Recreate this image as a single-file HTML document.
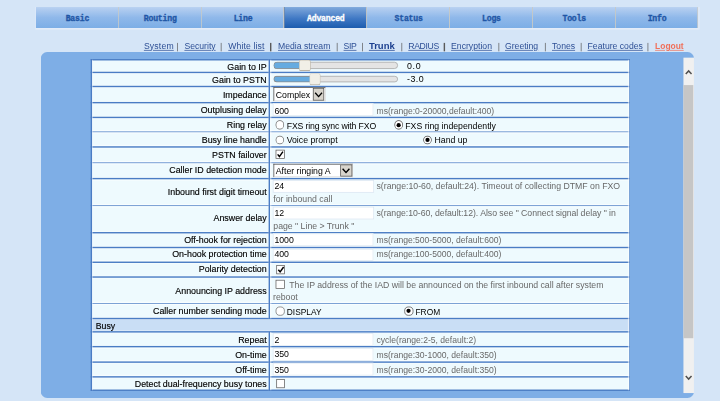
<!DOCTYPE html>
<html><head><meta charset="utf-8"><title>Trunk</title>
<style>
html,body{margin:0;padding:0;width:720px;height:401px;overflow:hidden;background:#d5e5f7;}
#r{position:absolute;left:0;top:0;width:1024px;height:570px;transform:scale(0.703125);transform-origin:0 0;font-family:"Liberation Sans",sans-serif;font-size:12px;color:#222;}
.a{position:absolute;}
</style></head><body><div id="r">
<div class="a" style="left:51.2px;top:9.96px;width:117.76px;height:30.15px;background:linear-gradient(#b9d1f1,#8fb8ea 50%,#7caee6);box-sizing:border-box;border-right:1.4px solid #c4c0b6;"></div>
<div class="a" style="left:110.08px;top:19.95px;font-size:11.6px;line-height:14.5px;font-weight:bold;color:#1f56a6;font-family:'Liberation Mono',monospace;white-space:nowrap;transform:translateX(-50%) scaleY(1.14);transform-origin:50% 72%;letter-spacing:-0.3px;-webkit-text-stroke:0.45px #1f56a6;">Basic</div>
<div class="a" style="left:168.96px;top:9.96px;width:117.76px;height:30.15px;background:linear-gradient(#b9d1f1,#8fb8ea 50%,#7caee6);box-sizing:border-box;border-right:1.4px solid #c4c0b6;"></div>
<div class="a" style="left:227.84px;top:19.95px;font-size:11.6px;line-height:14.5px;font-weight:bold;color:#1f56a6;font-family:'Liberation Mono',monospace;white-space:nowrap;transform:translateX(-50%) scaleY(1.14);transform-origin:50% 72%;letter-spacing:-0.3px;-webkit-text-stroke:0.45px #1f56a6;">Routing</div>
<div class="a" style="left:286.72px;top:9.96px;width:117.76px;height:30.15px;background:linear-gradient(#b9d1f1,#8fb8ea 50%,#7caee6);box-sizing:border-box;border-right:1.4px solid #c4c0b6;"></div>
<div class="a" style="left:345.6px;top:19.95px;font-size:11.6px;line-height:14.5px;font-weight:bold;color:#1f56a6;font-family:'Liberation Mono',monospace;white-space:nowrap;transform:translateX(-50%) scaleY(1.14);transform-origin:50% 72%;letter-spacing:-0.3px;-webkit-text-stroke:0.45px #1f56a6;">Line</div>
<div class="a" style="left:404.48px;top:9.96px;width:117.76px;height:30.15px;background:linear-gradient(#80a9dc,#3f78c4 55%,#1d5cae);box-sizing:border-box;border-right:1.4px solid #c4c0b6;"></div>
<div class="a" style="left:463.36px;top:19.95px;font-size:11.6px;line-height:14.5px;font-weight:bold;color:#ffffff;font-family:'Liberation Mono',monospace;white-space:nowrap;transform:translateX(-50%) scaleY(1.14);transform-origin:50% 72%;letter-spacing:-0.3px;-webkit-text-stroke:0.45px #ffffff;">Advanced</div>
<div class="a" style="left:522.24px;top:9.96px;width:117.76px;height:30.15px;background:linear-gradient(#b9d1f1,#8fb8ea 50%,#7caee6);box-sizing:border-box;border-right:1.4px solid #c4c0b6;"></div>
<div class="a" style="left:581.12px;top:19.95px;font-size:11.6px;line-height:14.5px;font-weight:bold;color:#1f56a6;font-family:'Liberation Mono',monospace;white-space:nowrap;transform:translateX(-50%) scaleY(1.14);transform-origin:50% 72%;letter-spacing:-0.3px;-webkit-text-stroke:0.45px #1f56a6;">Status</div>
<div class="a" style="left:640.0px;top:9.96px;width:117.76px;height:30.15px;background:linear-gradient(#b9d1f1,#8fb8ea 50%,#7caee6);box-sizing:border-box;border-right:1.4px solid #c4c0b6;"></div>
<div class="a" style="left:698.88px;top:19.95px;font-size:11.6px;line-height:14.5px;font-weight:bold;color:#1f56a6;font-family:'Liberation Mono',monospace;white-space:nowrap;transform:translateX(-50%) scaleY(1.14);transform-origin:50% 72%;letter-spacing:-0.3px;-webkit-text-stroke:0.45px #1f56a6;">Logs</div>
<div class="a" style="left:757.76px;top:9.96px;width:117.76px;height:30.15px;background:linear-gradient(#b9d1f1,#8fb8ea 50%,#7caee6);box-sizing:border-box;border-right:1.4px solid #c4c0b6;"></div>
<div class="a" style="left:816.64px;top:19.95px;font-size:11.6px;line-height:14.5px;font-weight:bold;color:#1f56a6;font-family:'Liberation Mono',monospace;white-space:nowrap;transform:translateX(-50%) scaleY(1.14);transform-origin:50% 72%;letter-spacing:-0.3px;-webkit-text-stroke:0.45px #1f56a6;">Tools</div>
<div class="a" style="left:875.52px;top:9.96px;width:117.76px;height:30.15px;background:linear-gradient(#b9d1f1,#8fb8ea 50%,#7caee6);box-sizing:border-box;border-right:1.4px solid #c4c0b6;"></div>
<div class="a" style="left:934.4px;top:19.95px;font-size:11.6px;line-height:14.5px;font-weight:bold;color:#1f56a6;font-family:'Liberation Mono',monospace;white-space:nowrap;transform:translateX(-50%) scaleY(1.14);transform-origin:50% 72%;letter-spacing:-0.3px;-webkit-text-stroke:0.45px #1f56a6;">Info</div>
<div class="a" style="left:404.2px;top:9.96px;width:1.28px;height:30.15px;background:#6f86a4;"></div>
<div class="a" style="left:51.2px;top:40.11px;width:942.22px;height:1.42px;background:#e6eefa;"></div>
<div class="a" style="left:49.78px;top:9.96px;width:1.42px;height:31.85px;background:#e2ecf9;"></div>
<div class="a" style="left:993.42px;top:9.96px;width:1.42px;height:31.85px;background:#e2ecf9;"></div>
<div class="a" style="left:204.66px;top:58.95px;font-size:12.3px;line-height:15.38px;font-weight:normal;color:#2d4f95;font-family:'Liberation Sans',sans-serif;white-space:nowrap;text-decoration:underline;letter-spacing:0.25px;">System</div>
<div class="a" style="left:262.26px;top:58.95px;font-size:12.3px;line-height:15.38px;font-weight:normal;color:#2d4f95;font-family:'Liberation Sans',sans-serif;white-space:nowrap;text-decoration:underline;letter-spacing:0px;">Security</div>
<div class="a" style="left:324.69px;top:58.95px;font-size:12.3px;line-height:15.38px;font-weight:normal;color:#2d4f95;font-family:'Liberation Sans',sans-serif;white-space:nowrap;text-decoration:underline;letter-spacing:0.15px;">White list</div>
<div class="a" style="left:395.38px;top:58.95px;font-size:12.3px;line-height:15.38px;font-weight:normal;color:#2d4f95;font-family:'Liberation Sans',sans-serif;white-space:nowrap;text-decoration:underline;letter-spacing:0px;">Media stream</div>
<div class="a" style="left:488.68px;top:58.95px;font-size:12.3px;line-height:15.38px;font-weight:normal;color:#2d4f95;font-family:'Liberation Sans',sans-serif;white-space:nowrap;text-decoration:underline;letter-spacing:-0.5px;">SIP</div>
<div class="a" style="left:524.66px;top:57.78px;font-size:13.5px;line-height:16.88px;font-weight:bold;color:#1b3f8f;font-family:'Liberation Sans',sans-serif;white-space:nowrap;text-decoration:underline;">Trunk</div>
<div class="a" style="left:580.69px;top:58.95px;font-size:12.3px;line-height:15.38px;font-weight:normal;color:#2d4f95;font-family:'Liberation Sans',sans-serif;white-space:nowrap;text-decoration:underline;letter-spacing:-0.5px;">RADIUS</div>
<div class="a" style="left:641.56px;top:58.95px;font-size:12.3px;line-height:15.38px;font-weight:normal;color:#2d4f95;font-family:'Liberation Sans',sans-serif;white-space:nowrap;text-decoration:underline;letter-spacing:0px;">Encryption</div>
<div class="a" style="left:718.22px;top:58.95px;font-size:12.3px;line-height:15.38px;font-weight:normal;color:#2d4f95;font-family:'Liberation Sans',sans-serif;white-space:nowrap;text-decoration:underline;letter-spacing:0px;">Greeting</div>
<div class="a" style="left:785.07px;top:58.95px;font-size:12.3px;line-height:15.38px;font-weight:normal;color:#2d4f95;font-family:'Liberation Sans',sans-serif;white-space:nowrap;text-decoration:underline;letter-spacing:0px;">Tones</div>
<div class="a" style="left:835.7px;top:58.95px;font-size:12.3px;line-height:15.38px;font-weight:normal;color:#2d4f95;font-family:'Liberation Sans',sans-serif;white-space:nowrap;text-decoration:underline;letter-spacing:0px;">Feature codes</div>
<div class="a" style="left:931.7px;top:59.24px;font-size:12px;line-height:15.0px;font-weight:bold;color:#f0705a;font-family:'Liberation Sans',sans-serif;white-space:nowrap;text-decoration:underline;">Logout</div>
<div class="a" style="left:252.3px;top:60.87px;width:1.14px;height:12.52px;background:#5a5a5a;"></div>
<div class="a" style="left:314.17px;top:60.87px;width:1.14px;height:12.52px;background:#5a5a5a;"></div>
<div class="a" style="left:384.43px;top:60.87px;width:1.13px;height:12.52px;background:#5a5a5a;"></div>
<div class="a" style="left:479.29px;top:60.87px;width:1.14px;height:12.52px;background:#5a5a5a;"></div>
<div class="a" style="left:514.84px;top:60.87px;width:1.14px;height:12.52px;background:#5a5a5a;"></div>
<div class="a" style="left:570.74px;top:60.87px;width:1.14px;height:12.52px;background:#5a5a5a;"></div>
<div class="a" style="left:631.47px;top:60.87px;width:1.13px;height:12.52px;background:#5a5a5a;"></div>
<div class="a" style="left:708.55px;top:60.87px;width:1.14px;height:12.52px;background:#5a5a5a;"></div>
<div class="a" style="left:774.54px;top:60.87px;width:1.14px;height:12.52px;background:#5a5a5a;"></div>
<div class="a" style="left:825.88px;top:60.87px;width:1.14px;height:12.52px;background:#5a5a5a;"></div>
<div class="a" style="left:921.32px;top:60.87px;width:1.13px;height:12.52px;background:#5a5a5a;"></div>
<div class="a" style="left:58.31px;top:73.96px;width:928.71px;height:491.8px;background:#7eaee6;border-radius:9px;"></div>
<div class="a" style="left:129.99px;top:84.76px;width:765.44px;height:469.91px;background:#eefafe;"></div>
<div class="a" style="left:129.99px;top:452.84px;width:765.44px;height:18.91px;background:#c9def5;"></div>
<div class="a" style="left:129.99px;top:100.73px;width:765.44px;height:1.42px;background:rgba(255,255,255,0.55);"></div>
<div class="a" style="left:129.99px;top:103.93px;width:765.44px;height:1.42px;background:rgba(255,255,255,0.55);"></div>
<div class="a" style="left:129.99px;top:120.64px;width:765.44px;height:1.42px;background:rgba(255,255,255,0.55);"></div>
<div class="a" style="left:129.99px;top:123.84px;width:765.44px;height:1.42px;background:rgba(255,255,255,0.55);"></div>
<div class="a" style="left:129.99px;top:143.82px;width:765.44px;height:1.42px;background:rgba(255,255,255,0.55);"></div>
<div class="a" style="left:129.99px;top:147.02px;width:765.44px;height:1.42px;background:rgba(255,255,255,0.55);"></div>
<div class="a" style="left:129.99px;top:164.73px;width:765.44px;height:1.42px;background:rgba(255,255,255,0.55);"></div>
<div class="a" style="left:129.99px;top:167.93px;width:765.44px;height:1.42px;background:rgba(255,255,255,0.55);"></div>
<div class="a" style="left:129.99px;top:185.21px;width:765.44px;height:1.42px;background:rgba(255,255,255,0.55);"></div>
<div class="a" style="left:129.99px;top:188.41px;width:765.44px;height:1.42px;background:rgba(255,255,255,0.55);"></div>
<div class="a" style="left:129.99px;top:206.4px;width:765.44px;height:1.42px;background:rgba(255,255,255,0.55);"></div>
<div class="a" style="left:129.99px;top:209.6px;width:765.44px;height:1.42px;background:rgba(255,255,255,0.55);"></div>
<div class="a" style="left:129.99px;top:229.3px;width:765.44px;height:1.42px;background:rgba(255,255,255,0.55);"></div>
<div class="a" style="left:129.99px;top:232.5px;width:765.44px;height:1.42px;background:rgba(255,255,255,0.55);"></div>
<div class="a" style="left:129.99px;top:251.91px;width:765.44px;height:1.42px;background:rgba(255,255,255,0.55);"></div>
<div class="a" style="left:129.99px;top:255.11px;width:765.44px;height:1.42px;background:rgba(255,255,255,0.55);"></div>
<div class="a" style="left:129.99px;top:290.31px;width:765.44px;height:1.42px;background:rgba(255,255,255,0.55);"></div>
<div class="a" style="left:129.99px;top:293.51px;width:765.44px;height:1.42px;background:rgba(255,255,255,0.55);"></div>
<div class="a" style="left:129.99px;top:328.57px;width:765.44px;height:1.42px;background:rgba(255,255,255,0.55);"></div>
<div class="a" style="left:129.99px;top:331.77px;width:765.44px;height:1.42px;background:rgba(255,255,255,0.55);"></div>
<div class="a" style="left:129.99px;top:349.62px;width:765.44px;height:1.42px;background:rgba(255,255,255,0.55);"></div>
<div class="a" style="left:129.99px;top:352.82px;width:765.44px;height:1.42px;background:rgba(255,255,255,0.55);"></div>
<div class="a" style="left:129.99px;top:370.38px;width:765.44px;height:1.42px;background:rgba(255,255,255,0.55);"></div>
<div class="a" style="left:129.99px;top:373.58px;width:765.44px;height:1.42px;background:rgba(255,255,255,0.55);"></div>
<div class="a" style="left:129.99px;top:391.57px;width:765.44px;height:1.43px;background:rgba(255,255,255,0.55);"></div>
<div class="a" style="left:129.99px;top:394.77px;width:765.44px;height:1.43px;background:rgba(255,255,255,0.55);"></div>
<div class="a" style="left:129.99px;top:429.26px;width:765.44px;height:1.42px;background:rgba(255,255,255,0.55);"></div>
<div class="a" style="left:129.99px;top:432.46px;width:765.44px;height:1.42px;background:rgba(255,255,255,0.55);"></div>
<div class="a" style="left:129.99px;top:450.88px;width:765.44px;height:1.42px;background:rgba(255,255,255,0.55);"></div>
<div class="a" style="left:129.99px;top:454.08px;width:765.44px;height:1.42px;background:rgba(255,255,255,0.55);"></div>
<div class="a" style="left:129.99px;top:469.8px;width:765.44px;height:1.42px;background:rgba(255,255,255,0.55);"></div>
<div class="a" style="left:129.99px;top:473.0px;width:765.44px;height:1.42px;background:rgba(255,255,255,0.55);"></div>
<div class="a" style="left:129.99px;top:490.99px;width:765.44px;height:1.42px;background:rgba(255,255,255,0.55);"></div>
<div class="a" style="left:129.99px;top:494.19px;width:765.44px;height:1.42px;background:rgba(255,255,255,0.55);"></div>
<div class="a" style="left:129.99px;top:512.46px;width:765.44px;height:1.42px;background:rgba(255,255,255,0.55);"></div>
<div class="a" style="left:129.99px;top:515.66px;width:765.44px;height:1.42px;background:rgba(255,255,255,0.55);"></div>
<div class="a" style="left:129.99px;top:533.37px;width:765.44px;height:1.42px;background:rgba(255,255,255,0.55);"></div>
<div class="a" style="left:129.99px;top:536.57px;width:765.44px;height:1.42px;background:rgba(255,255,255,0.55);"></div>
<div class="a" style="left:129.1px;top:84.23px;width:767.22px;height:1.78px;background:#4a7cc4;"></div>
<div class="a" style="left:129.1px;top:102.15px;width:767.22px;height:1.78px;background:#4a7cc4;"></div>
<div class="a" style="left:129.1px;top:122.06px;width:767.22px;height:1.78px;background:#4a7cc4;"></div>
<div class="a" style="left:129.1px;top:145.24px;width:767.22px;height:1.78px;background:#4a7cc4;"></div>
<div class="a" style="left:129.1px;top:166.15px;width:767.22px;height:1.78px;background:#4a7cc4;"></div>
<div class="a" style="left:129.1px;top:186.63px;width:767.22px;height:1.78px;background:#4a7cc4;"></div>
<div class="a" style="left:129.1px;top:207.82px;width:767.22px;height:1.78px;background:#4a7cc4;"></div>
<div class="a" style="left:129.1px;top:230.72px;width:767.22px;height:1.78px;background:#4a7cc4;"></div>
<div class="a" style="left:129.1px;top:253.33px;width:767.22px;height:1.78px;background:#4a7cc4;"></div>
<div class="a" style="left:129.1px;top:291.73px;width:767.22px;height:1.78px;background:#4a7cc4;"></div>
<div class="a" style="left:129.1px;top:329.99px;width:767.22px;height:1.78px;background:#4a7cc4;"></div>
<div class="a" style="left:129.1px;top:351.04px;width:767.22px;height:1.78px;background:#4a7cc4;"></div>
<div class="a" style="left:129.1px;top:371.8px;width:767.22px;height:1.78px;background:#4a7cc4;"></div>
<div class="a" style="left:129.1px;top:393.0px;width:767.22px;height:1.77px;background:#4a7cc4;"></div>
<div class="a" style="left:129.1px;top:430.68px;width:767.22px;height:1.78px;background:#4a7cc4;"></div>
<div class="a" style="left:129.1px;top:452.3px;width:767.22px;height:1.78px;background:#4a7cc4;"></div>
<div class="a" style="left:129.1px;top:471.22px;width:767.22px;height:1.78px;background:#4a7cc4;"></div>
<div class="a" style="left:129.1px;top:492.41px;width:767.22px;height:1.78px;background:#4a7cc4;"></div>
<div class="a" style="left:129.1px;top:513.88px;width:767.22px;height:1.78px;background:#4a7cc4;"></div>
<div class="a" style="left:129.1px;top:534.79px;width:767.22px;height:1.78px;background:#4a7cc4;"></div>
<div class="a" style="left:129.1px;top:554.13px;width:767.22px;height:1.78px;background:#4a7cc4;"></div>
<div class="a" style="left:129.1px;top:83.88px;width:1.78px;height:471.68px;background:#4a7cc4;"></div>
<div class="a" style="left:894.54px;top:83.88px;width:1.78px;height:471.68px;background:#4a7cc4;"></div>
<div class="a" style="left:130.88px;top:84.76px;width:1.42px;height:469.91px;background:rgba(255,255,255,0.55);"></div>
<div class="a" style="left:893.12px;top:84.76px;width:1.42px;height:469.91px;background:rgba(255,255,255,0.55);"></div>
<div class="a" style="left:380.98px;top:84.76px;width:1.42px;height:368.36px;background:rgba(255,255,255,0.45);"></div>
<div class="a" style="left:384.18px;top:84.76px;width:1.42px;height:368.36px;background:rgba(255,255,255,0.45);"></div>
<div class="a" style="left:380.98px;top:472.04px;width:1.42px;height:82.63px;background:rgba(255,255,255,0.45);"></div>
<div class="a" style="left:384.18px;top:472.04px;width:1.42px;height:82.63px;background:rgba(255,255,255,0.45);"></div>
<div class="a" style="left:382.4px;top:84.76px;width:1.78px;height:368.08px;background:#4a7cc4;"></div>
<div class="a" style="left:382.4px;top:471.75px;width:1.78px;height:82.92px;background:#4a7cc4;"></div>
<div class="a" style="right:644.69px;top:87.96px;font-size:12.6px;line-height:15.75px;font-weight:normal;color:#000;font-family:'Liberation Sans',sans-serif;white-space:nowrap;-webkit-text-stroke:0.2px #000;">Gain to IP</div>
<div class="a" style="right:644.69px;top:106.87px;font-size:12.6px;line-height:15.75px;font-weight:normal;color:#000;font-family:'Liberation Sans',sans-serif;white-space:nowrap;-webkit-text-stroke:0.2px #000;">Gain to PSTN</div>
<div class="a" style="right:644.69px;top:128.20px;font-size:12.6px;line-height:15.75px;font-weight:normal;color:#000;font-family:'Liberation Sans',sans-serif;white-space:nowrap;-webkit-text-stroke:0.2px #000;">Impedance</div>
<div class="a" style="right:644.69px;top:150.25px;font-size:12.6px;line-height:15.75px;font-weight:normal;color:#000;font-family:'Liberation Sans',sans-serif;white-space:nowrap;-webkit-text-stroke:0.2px #000;">Outplusing delay</div>
<div class="a" style="right:644.69px;top:171.30px;font-size:12.6px;line-height:15.75px;font-weight:normal;color:#000;font-family:'Liberation Sans',sans-serif;white-space:nowrap;-webkit-text-stroke:0.2px #000;">Ring relay</div>
<div class="a" style="right:644.69px;top:192.35px;font-size:12.6px;line-height:15.75px;font-weight:normal;color:#000;font-family:'Liberation Sans',sans-serif;white-space:nowrap;-webkit-text-stroke:0.2px #000;">Busy line handle</div>
<div class="a" style="right:644.69px;top:213.11px;font-size:12.6px;line-height:15.75px;font-weight:normal;color:#000;font-family:'Liberation Sans',sans-serif;white-space:nowrap;-webkit-text-stroke:0.2px #000;">PSTN failover</div>
<div class="a" style="right:644.69px;top:234.87px;font-size:12.6px;line-height:15.75px;font-weight:normal;color:#000;font-family:'Liberation Sans',sans-serif;white-space:nowrap;-webkit-text-stroke:0.2px #000;">Caller ID detection mode</div>
<div class="a" style="right:644.69px;top:265.73px;font-size:12.6px;line-height:15.75px;font-weight:normal;color:#000;font-family:'Liberation Sans',sans-serif;white-space:nowrap;-webkit-text-stroke:0.2px #000;">Inbound first digit timeout</div>
<div class="a" style="right:644.69px;top:304.28px;font-size:12.6px;line-height:15.75px;font-weight:normal;color:#000;font-family:'Liberation Sans',sans-serif;white-space:nowrap;-webkit-text-stroke:0.2px #000;">Answer delay</div>
<div class="a" style="right:644.69px;top:334.00px;font-size:12.6px;line-height:15.75px;font-weight:normal;color:#000;font-family:'Liberation Sans',sans-serif;white-space:nowrap;-webkit-text-stroke:0.2px #000;">Off-hook for rejection</div>
<div class="a" style="right:644.69px;top:354.76px;font-size:12.6px;line-height:15.75px;font-weight:normal;color:#000;font-family:'Liberation Sans',sans-serif;white-space:nowrap;-webkit-text-stroke:0.2px #000;">On-hook protection time</div>
<div class="a" style="right:644.69px;top:376.10px;font-size:12.6px;line-height:15.75px;font-weight:normal;color:#000;font-family:'Liberation Sans',sans-serif;white-space:nowrap;-webkit-text-stroke:0.2px #000;">Polarity detection</div>
<div class="a" style="right:644.69px;top:406.96px;font-size:12.6px;line-height:15.75px;font-weight:normal;color:#000;font-family:'Liberation Sans',sans-serif;white-space:nowrap;-webkit-text-stroke:0.2px #000;">Announcing IP address</div>
<div class="a" style="right:644.69px;top:436.26px;font-size:12.6px;line-height:15.75px;font-weight:normal;color:#000;font-family:'Liberation Sans',sans-serif;white-space:nowrap;-webkit-text-stroke:0.2px #000;">Caller number sending mode</div>
<div class="a" style="right:644.69px;top:476.79px;font-size:12.6px;line-height:15.75px;font-weight:normal;color:#000;font-family:'Liberation Sans',sans-serif;white-space:nowrap;-webkit-text-stroke:0.2px #000;">Repeat</div>
<div class="a" style="right:644.69px;top:497.70px;font-size:12.6px;line-height:15.75px;font-weight:normal;color:#000;font-family:'Liberation Sans',sans-serif;white-space:nowrap;-webkit-text-stroke:0.2px #000;">On-time</div>
<div class="a" style="right:644.69px;top:519.03px;font-size:12.6px;line-height:15.75px;font-weight:normal;color:#000;font-family:'Liberation Sans',sans-serif;white-space:nowrap;-webkit-text-stroke:0.2px #000;">Off-time</div>
<div class="a" style="right:644.69px;top:539.51px;font-size:12.6px;line-height:15.75px;font-weight:normal;color:#000;font-family:'Liberation Sans',sans-serif;white-space:nowrap;-webkit-text-stroke:0.2px #000;">Detect dual-frequency busy tones</div>
<div class="a" style="left:136.25px;top:456.93px;font-size:12.4px;line-height:15.5px;font-weight:normal;color:#000;font-family:'Liberation Sans',sans-serif;white-space:nowrap;-webkit-text-stroke:0.2px #000;">Busy</div>
<div class="a" style="left:388.69px;top:88.46px;width:177.78px;height:9.39px;background:#e4e4e4;border:1.3px solid #a0a0a0;border-radius:5px;box-sizing:border-box;"></div>
<div class="a" style="left:388.69px;top:88.46px;width:39.04px;height:9.39px;background:#66abe0;border:1.3px solid #8a8a8a;border-right:none;border-radius:5px 0 0 5px;box-sizing:border-box;"></div>
<div class="a" style="left:424.89px;top:84.62px;width:16.99px;height:16.78px;background:#f1efe7;border:1.2px solid;border-color:#c8c0b0 #a89e8c #a89e8c #c8c0b0;border-radius:3px;box-sizing:border-box;"></div>
<div class="a" style="left:578.84px;top:86.96px;font-size:12.6px;line-height:15.75px;font-weight:normal;color:#000;font-family:'Liberation Sans',sans-serif;white-space:nowrap;letter-spacing:0.9px;">0.0</div>
<div class="a" style="left:388.69px;top:107.95px;width:177.78px;height:8.96px;background:#e4e4e4;border:1.3px solid #a0a0a0;border-radius:5px;box-sizing:border-box;"></div>
<div class="a" style="left:388.69px;top:107.95px;width:53.91px;height:8.96px;background:#66abe0;border:1.3px solid #8a8a8a;border-right:none;border-radius:5px 0 0 5px;box-sizing:border-box;"></div>
<div class="a" style="left:439.75px;top:104.11px;width:16.36px;height:16.92px;background:#f1efe7;border:1.2px solid;border-color:#c8c0b0 #a89e8c #a89e8c #c8c0b0;border-radius:3px;box-sizing:border-box;"></div>
<div class="a" style="left:578.84px;top:106.30px;font-size:12.6px;line-height:15.75px;font-weight:normal;color:#000;font-family:'Liberation Sans',sans-serif;white-space:nowrap;letter-spacing:0.7px;">-3.0</div>
<div class="a" style="left:388.69px;top:124.3px;width:73.96px;height:20.06px;background:#fff;border:1.5px solid;border-color:#3c3c3c #d2d2d2 #d2d2d2 #3c3c3c;box-sizing:border-box;"></div>
<div class="a" style="left:445.01px;top:125.44px;width:16.22px;height:17.64px;background:#d8d4cc;border:1.2px solid #505050;box-sizing:border-box;"></div>
<svg class="a" style="left:446.01px;top:128.57px;overflow:visible" width="14.22" height="11.38" viewBox="0 0 10 8"><path d="M1.6 2.1 L5 5.9 L8.4 2.1" fill="none" stroke="#000" stroke-width="1.35"/></svg>
<div class="a" style="left:392.25px;top:127.83px;font-size:12.4px;line-height:15.5px;font-weight:normal;color:#000;font-family:'Liberation Sans',sans-serif;white-space:nowrap;">Complex</div>
<div class="a" style="left:388.27px;top:147.2px;width:142.79px;height:18.06px;background:#fff;border:1px solid #dde8f2;box-sizing:border-box;"></div>
<div class="a" style="left:390.26px;top:150.72px;font-size:12.4px;line-height:15.5px;font-weight:normal;color:#000;font-family:'Liberation Sans',sans-serif;white-space:nowrap;">600</div>
<div class="a" style="left:535.47px;top:150.92px;font-size:12.2px;line-height:15.25px;font-weight:normal;color:#686868;font-family:'Liberation Sans',sans-serif;white-space:nowrap;">ms(range:0-20000,default:400)</div>
<div class="a" style="left:391.96px;top:171.38px;width:12.52px;height:12.51px;background:#fff;border:1.3px solid #6a6a6a;border-radius:50%;box-sizing:border-box;"></div>
<div class="a" style="left:407.75px;top:172.06px;font-size:12.4px;line-height:15.5px;font-weight:normal;color:#000;font-family:'Liberation Sans',sans-serif;white-space:nowrap;letter-spacing:-0.2px;">FXS ring sync with FXO</div>
<div class="a" style="left:560.64px;top:171.38px;width:12.52px;height:12.51px;background:#fff;border:1.3px solid #4a4a4a;border-radius:50%;box-sizing:border-box;"></div>
<div class="a" style="left:563.91px;top:174.65px;width:5.97px;height:5.97px;background:#000;border-radius:50%;"></div>
<div class="a" style="left:576.43px;top:172.06px;font-size:12.4px;line-height:15.5px;font-weight:normal;color:#000;font-family:'Liberation Sans',sans-serif;white-space:nowrap;">FXS ring independently</div>
<div class="a" style="left:391.96px;top:192.57px;width:12.52px;height:12.51px;background:#fff;border:1.3px solid #6a6a6a;border-radius:50%;box-sizing:border-box;"></div>
<div class="a" style="left:407.75px;top:193.39px;font-size:12.4px;line-height:15.5px;font-weight:normal;color:#000;font-family:'Liberation Sans',sans-serif;white-space:nowrap;">Voice prompt</div>
<div class="a" style="left:601.6px;top:192.57px;width:12.52px;height:12.51px;background:#fff;border:1.3px solid #4a4a4a;border-radius:50%;box-sizing:border-box;"></div>
<div class="a" style="left:604.87px;top:195.84px;width:5.97px;height:5.97px;background:#000;border-radius:50%;"></div>
<div class="a" style="left:617.96px;top:193.39px;font-size:12.4px;line-height:15.5px;font-weight:normal;color:#000;font-family:'Liberation Sans',sans-serif;white-space:nowrap;">Hand up</div>
<div class="a" style="left:392.11px;top:212.91px;width:12.8px;height:12.8px;background:#fff;border:1.3px solid #555;box-sizing:border-box;"></div>
<svg class="a" style="left:392.11px;top:212.91px" width="12.8" height="12.8" viewBox="0 0 9 9"><path d="M2 4.6 L3.8 6.8 L7.3 1.9" fill="none" stroke="#000" stroke-width="1.5"/></svg>
<div class="a" style="left:388.69px;top:232.96px;width:113.35px;height:19.2px;background:#fff;border:1.5px solid;border-color:#3c3c3c #d2d2d2 #d2d2d2 #3c3c3c;box-sizing:border-box;"></div>
<div class="a" style="left:484.27px;top:234.1px;width:16.35px;height:16.78px;background:#d8d4cc;border:1.2px solid #505050;box-sizing:border-box;"></div>
<svg class="a" style="left:485.33px;top:236.8px;overflow:visible" width="14.22" height="11.38" viewBox="0 0 10 8"><path d="M1.6 2.1 L5 5.9 L8.4 2.1" fill="none" stroke="#000" stroke-width="1.35"/></svg>
<div class="a" style="left:392.25px;top:235.77px;font-size:12.4px;line-height:15.5px;font-weight:normal;color:#000;font-family:'Liberation Sans',sans-serif;white-space:nowrap;">After ringing A</div>
<div class="a" style="left:388.27px;top:255.57px;width:143.36px;height:18.49px;background:#fff;border:1px solid #d7e4f1;box-sizing:border-box;"></div>
<div class="a" style="left:390.26px;top:257.82px;font-size:12.4px;line-height:15.5px;font-weight:normal;color:#000;font-family:'Liberation Sans',sans-serif;white-space:nowrap;">24</div>
<div class="a" style="left:535.47px;top:257.82px;font-size:12.4px;line-height:15.5px;font-weight:normal;color:#686868;font-family:'Liberation Sans',sans-serif;white-space:nowrap;">s(range:10-60, default:24). Timeout of collecting DTMF on FXO</div>
<div class="a" style="left:388.69px;top:276.02px;font-size:12.4px;line-height:15.5px;font-weight:normal;color:#686868;font-family:'Liberation Sans',sans-serif;white-space:nowrap;">for inbound call</div>
<div class="a" style="left:388.27px;top:294.12px;width:143.36px;height:18.34px;background:#fff;border:1px solid #d7e4f1;box-sizing:border-box;"></div>
<div class="a" style="left:390.26px;top:296.22px;font-size:12.4px;line-height:15.5px;font-weight:normal;color:#000;font-family:'Liberation Sans',sans-serif;white-space:nowrap;">12</div>
<div class="a" style="left:535.47px;top:296.22px;font-size:12.4px;line-height:15.5px;font-weight:normal;color:#686868;font-family:'Liberation Sans',sans-serif;white-space:nowrap;letter-spacing:-0.05px;">s(range:10-60, default:12). Also see &quot; Connect signal delay &quot; in</div>
<div class="a" style="left:388.69px;top:314.71px;font-size:12.4px;line-height:15.5px;font-weight:normal;color:#686868;font-family:'Liberation Sans',sans-serif;white-space:nowrap;">page &quot; Line &gt; Trunk &quot;</div>
<div class="a" style="left:388.27px;top:332.37px;width:142.79px;height:17.21px;background:#fff;border:1px solid #dde8f2;box-sizing:border-box;"></div>
<div class="a" style="left:390.26px;top:334.62px;font-size:12.4px;line-height:15.5px;font-weight:normal;color:#000;font-family:'Liberation Sans',sans-serif;white-space:nowrap;">1000</div>
<div class="a" style="left:535.47px;top:334.82px;font-size:12.2px;line-height:15.25px;font-weight:normal;color:#686868;font-family:'Liberation Sans',sans-serif;white-space:nowrap;">ms(range:500-5000, default:600)</div>
<div class="a" style="left:388.27px;top:353.71px;width:142.79px;height:17.21px;background:#fff;border:1px solid #dde8f2;box-sizing:border-box;"></div>
<div class="a" style="left:390.26px;top:355.24px;font-size:12.4px;line-height:15.5px;font-weight:normal;color:#000;font-family:'Liberation Sans',sans-serif;white-space:nowrap;">400</div>
<div class="a" style="left:535.47px;top:355.44px;font-size:12.2px;line-height:15.25px;font-weight:normal;color:#686868;font-family:'Liberation Sans',sans-serif;white-space:nowrap;">ms(range:100-5000, default:400)</div>
<div class="a" style="left:392.53px;top:376.89px;width:12.8px;height:12.8px;background:#fff;border:1.3px solid #555;box-sizing:border-box;"></div>
<svg class="a" style="left:392.53px;top:376.89px" width="12.8" height="12.8" viewBox="0 0 9 9"><path d="M2 4.6 L3.8 6.8 L7.3 1.9" fill="none" stroke="#000" stroke-width="1.5"/></svg>
<div class="a" style="left:392.25px;top:398.22px;width:12.8px;height:12.8px;background:#fff;border:1.3px solid #555;box-sizing:border-box;"></div>
<div class="a" style="left:411.45px;top:399.33px;font-size:12.4px;line-height:15.5px;font-weight:normal;color:#686868;font-family:'Liberation Sans',sans-serif;white-space:nowrap;">The IP address of the IAD will be announced on the first inbound call after system</div>
<div class="a" style="left:388.27px;top:415.97px;font-size:12.4px;line-height:15.5px;font-weight:normal;color:#686868;font-family:'Liberation Sans',sans-serif;white-space:nowrap;">reboot</div>
<div class="a" style="left:392.25px;top:436.34px;width:12.51px;height:12.51px;background:#fff;border:1.3px solid #6a6a6a;border-radius:50%;box-sizing:border-box;"></div>
<div class="a" style="left:407.89px;top:437.08px;font-size:11.9px;line-height:14.88px;font-weight:normal;color:#000;font-family:'Liberation Sans',sans-serif;white-space:nowrap;">DISPLAY</div>
<div class="a" style="left:575.0px;top:436.05px;width:12.52px;height:12.52px;background:#fff;border:1.3px solid #4a4a4a;border-radius:50%;box-sizing:border-box;"></div>
<div class="a" style="left:578.28px;top:439.32px;width:5.97px;height:5.98px;background:#000;border-radius:50%;"></div>
<div class="a" style="left:590.93px;top:437.08px;font-size:11.9px;line-height:14.88px;font-weight:normal;color:#000;font-family:'Liberation Sans',sans-serif;white-space:nowrap;">FROM</div>
<div class="a" style="left:388.27px;top:473.6px;width:142.79px;height:18.2px;background:#fff;border:1px solid #dde8f2;box-sizing:border-box;"></div>
<div class="a" style="left:390.26px;top:476.84px;font-size:12.4px;line-height:15.5px;font-weight:normal;color:#000;font-family:'Liberation Sans',sans-serif;white-space:nowrap;">2</div>
<div class="a" style="left:535.47px;top:477.04px;font-size:12.2px;line-height:15.25px;font-weight:normal;color:#686868;font-family:'Liberation Sans',sans-serif;white-space:nowrap;">cycle(range:2-5, default:2)</div>
<div class="a" style="left:388.27px;top:494.93px;width:142.79px;height:18.21px;background:#fff;border:1px solid #dde8f2;box-sizing:border-box;"></div>
<div class="a" style="left:390.26px;top:497.46px;font-size:12.4px;line-height:15.5px;font-weight:normal;color:#000;font-family:'Liberation Sans',sans-serif;white-space:nowrap;">350</div>
<div class="a" style="left:535.47px;top:497.66px;font-size:12.2px;line-height:15.25px;font-weight:normal;color:#686868;font-family:'Liberation Sans',sans-serif;white-space:nowrap;">ms(range:30-1000, default:350)</div>
<div class="a" style="left:388.27px;top:515.56px;width:142.79px;height:18.2px;background:#fff;border:1px solid #dde8f2;box-sizing:border-box;"></div>
<div class="a" style="left:390.26px;top:518.79px;font-size:12.4px;line-height:15.5px;font-weight:normal;color:#000;font-family:'Liberation Sans',sans-serif;white-space:nowrap;">350</div>
<div class="a" style="left:535.47px;top:518.99px;font-size:12.2px;line-height:15.25px;font-weight:normal;color:#686868;font-family:'Liberation Sans',sans-serif;white-space:nowrap;">ms(range:30-2000, default:350)</div>
<div class="a" style="left:392.53px;top:539.31px;width:12.8px;height:12.8px;background:#fff;border:1.3px solid #555;box-sizing:border-box;"></div>
<div class="a" style="left:971.66px;top:82.49px;width:15.08px;height:476.44px;background:#f0f0f0;"></div>
<div class="a" style="left:972.09px;top:120.89px;width:13.94px;height:360.53px;background:#c6c6c6;"></div>
<svg class="a" style="left:972.8px;top:98.13px" width="12.8" height="9.96" viewBox="0 0 9 7"><path d="M1.6 5 L4.5 2 L7.4 5" fill="none" stroke="#505050" stroke-width="1.5"/></svg>
<svg class="a" style="left:972.8px;top:531.91px" width="12.8" height="9.96" viewBox="0 0 9 7"><path d="M1.6 2 L4.5 5 L7.4 2" fill="none" stroke="#505050" stroke-width="1.5"/></svg>
</div></body></html>
